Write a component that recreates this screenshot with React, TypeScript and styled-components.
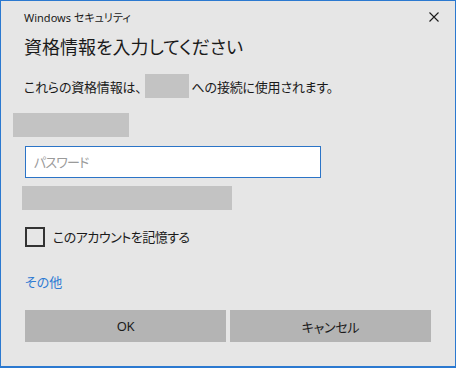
import React from "react"
import styled, { createGlobalStyle } from "styled-components"

const GlobalStyle = createGlobalStyle`
  html, body {
    margin: 0;
    padding: 0;
    background: #e6e6e6;
  }
  * {
    box-sizing: border-box;
  }
`

const FONT = `"Noto Sans", "Noto Sans CJK JP", sans-serif`

export default function App() {
  return (
    <>
      <GlobalStyle />
      <Window>
        <TitleBar>
          <TitleText>Windows セキュリティ</TitleText>
          <CloseButton aria-label="閉じる">
            <svg width="10" height="10" viewBox="0 0 10 10">
              <path d="M0.5 0.5 L9.5 9.5 M9.5 0.5 L0.5 9.5" stroke="#1a1a1a" strokeWidth="1.1" />
            </svg>
          </CloseButton>
        </TitleBar>

        <Content>
          <Heading>資格情報を入力してください</Heading>

          <Description>
            これらの資格情報は、
            <Redacted $width={44} />
            への接続に使用されます。
          </Description>

          <Redacted $width={116} $offset={-11} $top={15} />

          <PasswordInput placeholder="パスワード" autoFocus />

          <Redacted $width={210} $offset={-2} $top={8} />

          <CheckRow>
            <CheckBox />
            <CheckLabel>このアカウントを記憶する</CheckLabel>
          </CheckRow>

          <MoreLink>その他</MoreLink>

          <Buttons>
            <DialogButton>OK</DialogButton>
            <DialogButton>キャンセル</DialogButton>
          </Buttons>
        </Content>
      </Window>
    </>
  )
}

const Window = styled.div`
  width: 456px;
  height: 368px;
  background: #e6e6e6;
  border: 1px solid #2b79d0;
  border-bottom-width: 2px;
  font-family: ${FONT};
  font-feature-settings: "palt";
  color: #000;
  display: flex;
  flex-direction: column;
`

const TitleBar = styled.div`
  height: 32px;
  display: flex;
  align-items: center;
  justify-content: space-between;
  padding: 0 14px 0 23px;
`

const TitleText = styled.div`
  font-size: 11px;
  color: #1a1a1a;
`

const CloseButton = styled.div`
  width: 14px;
  height: 14px;
  display: flex;
  align-items: center;
  justify-content: center;
`

const Content = styled.div`
  display: flex;
  flex-direction: column;
  align-items: flex-start;
  padding-left: 23px;
`

const Heading = styled.h1`
  margin: 0;
  font-size: 18px;
  font-weight: 400;
  line-height: 28px;
  color: #1a1a1a;
`

const Description = styled.div`
  margin-top: 13px;
  display: flex;
  align-items: center;
  gap: 3px;
  height: 24px;
  font-size: 13px;
  letter-spacing: -0.2px;
  color: #1a1a1a;
  white-space: nowrap;
`

const Redacted = styled.span<{ $width: number; $offset?: number; $top?: number }>`
  display: block;
  flex: none;
  width: ${(p) => p.$width}px;
  height: 24px;
  background: #c3c3c3;
  margin-left: ${(p) => p.$offset ?? 0}px;
  margin-top: ${(p) => p.$top ?? 0}px;
`

const PasswordInput = styled.input`
  margin: 9px 0 0 1px;
  width: 296px;
  height: 32px;
  border: 1px solid #2b74c7;
  background: #fff;
  padding: 0 8px;
  font-family: ${FONT};
  font-feature-settings: "palt";
  font-size: 13px;
  letter-spacing: -0.8px;
  outline: none;
  caret-color: #000;

  &::placeholder {
    color: #9a9a9a;
  }
`

const CheckRow = styled.label`
  margin: 16px 0 0 1px;
  display: flex;
  align-items: center;
  gap: 8px;
  height: 21px;
`

const CheckBox = styled.span`
  width: 20px;
  height: 20px;
  border: 2px solid #333;
`

const CheckLabel = styled.span`
  font-size: 13px;
  letter-spacing: -0.5px;
  color: #1a1a1a;
`

const MoreLink = styled.a`
  margin: 25px 0 0 1px;
  font-size: 13px;
  line-height: 20px;
  color: #2f7bd3;
  cursor: pointer;
`

const Buttons = styled.div`
  margin: 18px 0 0 1px;
  display: grid;
  grid-template-columns: 201px 201px;
  gap: 4px;
`

const DialogButton = styled.button`
  height: 32px;
  border: none;
  background: #b4b4b4;
  font-family: ${FONT};
  font-feature-settings: "palt";
  font-size: 13px;
  letter-spacing: -0.3px;
  color: #1a1a1a;
`
